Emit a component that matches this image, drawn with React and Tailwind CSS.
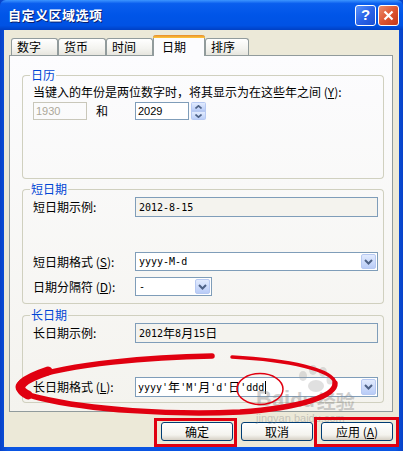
import React from "react";

function DropArrow() {
  return (
    <div className="w-[15px] self-stretch my-[1px] mr-[1px] rounded-[2px] bg-[linear-gradient(to_bottom,#e2ebfe,#b9ccf7)] border border-[#b7c9f2] flex items-center justify-center">
      <svg width="9" height="6" viewBox="0 0 9 6">
        <path d="M1 1 L4.5 4.5 L8 1" stroke="#4d6185" strokeWidth="2" fill="none" />
      </svg>
    </div>
  );
}

function Group({ title, bodyClass, children }) {
  return (
    <div className="flex flex-col w-[362px]">
      <div className="flex h-[16px]">
        <div className="w-[8px] h-[8px] mt-[8px] border-l border-t border-[#d0d0bf] rounded-tl-[4px]" />
        <span className="px-[1px] text-[12px] leading-[16px] text-[#0046d5]">{title}</span>
        <div className="flex-1 h-[8px] mt-[8px] border-r border-t border-[#d0d0bf] rounded-tr-[4px]" />
      </div>
      <div className={"border-x border-b border-[#d0d0bf] rounded-b-[4px] pl-[10px] pr-[5px] flex flex-col " + bodyClass}>
        {children}
      </div>
    </div>
  );
}

const mono = "font-['DejaVu_Sans_Mono','Liberation_Mono',monospace] text-[10px]";

function Tab({ label, w, selected }) {
  if (selected) {
    return (
      <div className={"relative z-10 -mb-[1px] h-[21px] bg-[#fcfcfe] border-x border-[#919b9c] rounded-t-[3px] flex flex-col " + w}>
        <div className="h-[3px] rounded-t-[3px] bg-[linear-gradient(to_bottom,#e68b2c,#ffc83c)] -mx-[1px]" />
        <div className="flex-1 flex items-center pl-[8px] text-[12px]">{label}</div>
      </div>
    );
  }
  return (
    <div className={"h-[17px] border border-b-0 border-[#919b9c] rounded-t-[3px] bg-[linear-gradient(to_bottom,#ffffff,#f3f3ef_60%,#e6e5de)] flex items-center pl-[5px] text-[12px] " + w}>
      {label}
    </div>
  );
}

function XPButton({ children }) {
  return (
    <div className="w-[72px] h-[19px] rounded-[3px] border border-[#003c74] bg-[linear-gradient(to_bottom,#ffffff,#f4f3ee_70%,#d6d0c5)] flex items-center justify-center text-[12px] leading-none">
      {children}
    </div>
  );
}

export default function App() {
  return (
    <div className="relative w-[403px] h-[451px] flex flex-col bg-[linear-gradient(to_right,#0842c8,#0a55e2_2%,#0a55e2_98%,#0842c8)] overflow-hidden font-['Noto_Sans_CJK_SC','Noto_Sans',sans-serif] text-black">
      {/* Title bar */}
      <div className="h-[30px] flex items-center pl-[8px] pr-[4px] rounded-t-[6px] bg-[linear-gradient(to_bottom,#3d95ff,#0a5eee_12%,#0055e8_50%,#0052e4_85%,#0040c4)]">
        <span className="text-white font-bold text-[13px] tracking-[0.5px] [text-shadow:1px_1px_0_#0a1f6e]">自定义区域选项</span>
        <div className="flex-1" />
        <div className="flex gap-[2px]">
          <div className="w-[21px] h-[21px] rounded-[3px] border border-white bg-[linear-gradient(135deg,#5b93fb,#2a63e8_50%,#1a4fd3)] flex items-center justify-center text-white font-bold text-[15px] font-['Liberation_Sans',sans-serif]">?</div>
          <div className="w-[21px] h-[21px] rounded-[3px] border border-white bg-[linear-gradient(135deg,#eb8d6d,#de5632_50%,#c4381a)] flex items-center justify-center">
            <svg width="11" height="11" viewBox="0 0 11 11">
              <path d="M1.5 1.5 L9.5 9.5 M9.5 1.5 L1.5 9.5" stroke="white" strokeWidth="2.2" />
            </svg>
          </div>
        </div>
      </div>

      {/* Body */}
      <div className="flex-1 flex px-[4px] pb-[4px]">
        <div className="flex-1 bg-[#ece9d8] flex flex-col">
          {/* Tabs */}
          <div className="mt-[5px] h-[20px] pl-[7px] flex items-end">
            <Tab label="数字" w="w-[47px]" />
            <Tab label="货币" w="w-[48px]" />
            <Tab label="时间" w="w-[47px]" />
            <Tab label="日期" w="w-[52px]" selected />
            <Tab label="排序" w="w-[44px]" />
          </div>

          {/* Panel */}
          <div className="ml-[5px] w-[384px] h-[357px] border border-[#919b9c] bg-[linear-gradient(to_bottom,#fcfcfe,#f4f3ee)] pl-[12px] pt-[11px] flex flex-col text-[12px]">
            <Group title="日历" bodyClass="h-[96px]">
              <div className="mt-[1px] h-[16px] leading-[16px] whitespace-nowrap">
                当键入的年份是两位数字时，将其显示为在这些年之间 (<span className="underline">Y</span>):
              </div>
              <div className="mt-[2px] flex h-[18px]">
                <div className="w-[102px] flex items-center">
                  <div className="w-[54px] h-[18px] border border-[#c9c7ba] flex items-center pl-[2px] text-[#aca899] font-['Liberation_Sans',sans-serif] text-[11px]">1930</div>
                  <span className="ml-[9px]">和</span>
                </div>
                <div className="w-[54px] h-[18px] border border-[#7f9db9] bg-white flex items-center pl-[2px] font-['Liberation_Sans',sans-serif] text-[11px]">2029</div>
                <div className="ml-[2px] w-[15px] h-[18px] flex flex-col rounded-[2px] overflow-hidden">
                  <div className="flex-1 bg-[linear-gradient(to_bottom,#e2ebfe,#bccff8)] border border-[#b7c9f2] flex items-center justify-center">
                    <svg width="7" height="4" viewBox="0 0 7 4"><path d="M0.5 3.5 L3.5 0.8 L6.5 3.5" stroke="#4d6185" strokeWidth="1.6" fill="none" /></svg>
                  </div>
                  <div className="flex-1 bg-[linear-gradient(to_bottom,#e2ebfe,#bccff8)] border border-[#b7c9f2] flex items-center justify-center">
                    <svg width="7" height="4" viewBox="0 0 7 4"><path d="M0.5 0.5 L3.5 3.2 L6.5 0.5" stroke="#4d6185" strokeWidth="1.6" fill="none" /></svg>
                  </div>
                </div>
              </div>
            </Group>

            <div className="mt-[2px]">
              <Group title="短日期" bodyClass="h-[107px]">
                <div className="h-[20px] flex items-center">
                  <span className="w-[102px]">短日期示例:</span>
                  <div className={"flex-1 h-[20px] border border-[#7f9db9] bg-[#f4f3ee] flex items-center pl-[3px] " + mono}>2012-8-15</div>
                </div>
                <div className="mt-[35px] h-[19px] flex items-center">
                  <span className="w-[102px]">短日期格式 (<span className="underline">S</span>):</span>
                  <div className="flex-1 h-[19px] border border-[#7f9db9] bg-white flex items-center">
                    <span className={"flex-1 pl-[3px] " + mono}>yyyy-M-d</span>
                    <DropArrow />
                  </div>
                </div>
                <div className="mt-[6px] h-[19px] flex items-center">
                  <span className="w-[102px]">日期分隔符 (<span className="underline">D</span>):</span>
                  <div className="w-[77px] h-[19px] border border-[#7f9db9] bg-white flex items-center">
                    <span className={"flex-1 pl-[3px] " + mono}>-</span>
                    <DropArrow />
                  </div>
                </div>
              </Group>
            </div>

            <div className="mt-[3px]">
              <Group title="长日期" bodyClass="h-[80px]">
                <div className="h-[20px] flex items-center">
                  <span className="w-[102px]">长日期示例:</span>
                  <div className="flex-1 h-[20px] border border-[#7f9db9] bg-[#f4f3ee] flex items-center pl-[3px]">
                    <span className={mono}>2012</span><span>年</span><span className={mono}>8</span><span>月</span><span className={mono}>15</span><span>日</span>
                  </div>
                </div>
                <div className="mt-[34px] h-[20px] flex items-center">
                  <span className="w-[102px]">长日期格式 (<span className="underline">L</span>):</span>
                  <div className="flex-1 h-[20px] border border-[#7f9db9] bg-white flex items-center">
                    <div className="flex-1 pl-[2px] flex items-center">
                      <span className={mono}>yyyy'</span><span>年</span><span className={mono}>'M'</span><span>月</span><span className={mono}>'d'</span><span>日</span><span className={mono}>'ddd</span>
                      <span className="ml-[1px] w-[1px] h-[13px] bg-black" />
                    </div>
                    <DropArrow />
                  </div>
                </div>
              </Group>
            </div>
          </div>

          {/* Buttons */}
          <div className="mt-[10px] flex justify-end gap-[8px] pr-[6px]">
            <XPButton>确定</XPButton>
            <XPButton>取消</XPButton>
            <XPButton>应用 (<span className="underline">A</span>)</XPButton>
          </div>
        </div>
      </div>

      {/* Baidu watermark */}
      <div className="absolute left-[256px] top-[388px] flex items-end opacity-40 pointer-events-none">
        <span className="font-['Liberation_Sans',sans-serif] font-bold text-[22px] leading-none text-[#8a8a8a]">Bai</span>
        <span className="font-['Liberation_Sans',sans-serif] font-bold text-[20px] leading-none text-[#8a8a8a]">du</span>
        <span className="ml-[2px] font-bold text-[19px] leading-none text-[#8a8a8a]">经验</span>
      </div>
      <div className="absolute left-[256px] top-[413px] text-[11px] leading-none font-['Liberation_Sans',sans-serif] text-[#8a8a8a] opacity-40 pointer-events-none">jingyan.baidu.com</div>
      <svg className="absolute left-0 top-0 pointer-events-none opacity-30" width="403" height="451">
        <g fill="#9a9a9a">
          <ellipse cx="303" cy="376" rx="4" ry="5" />
          <ellipse cx="313" cy="370" rx="4" ry="5" />
          <ellipse cx="323" cy="372" rx="4" ry="5" />
          <ellipse cx="330" cy="380" rx="3.5" ry="4.5" />
          <ellipse cx="316" cy="386" rx="8" ry="6" />
        </g>
      </svg>

      {/* Red annotations */}
      <svg className="absolute left-0 top-0 pointer-events-none" width="403" height="451">
        <g fill="none" stroke="#e00010" strokeLinecap="round">
          <path d="M212 356 C150 357, 70 364, 30 378 C12 385, 14 392, 40 398 C90 410, 170 415, 240 412 C300 408, 336 396, 335 383" strokeWidth="5.5" />
          <path d="M335 383 C333 370, 290 360, 232 357" strokeWidth="3.5" />
          <path d="M48 371 C24 379, 12 387, 28 395" strokeWidth="9" />
          <ellipse cx="260" cy="389" rx="23" ry="15.5" strokeWidth="1.5" />
        </g>
        <rect x="155.5" y="419.5" width="80" height="26" fill="none" stroke="#e00010" strokeWidth="3" />
        <rect x="315.5" y="418.5" width="82" height="27" fill="none" stroke="#e00010" strokeWidth="3" />
      </svg>
    </div>
  );
}
